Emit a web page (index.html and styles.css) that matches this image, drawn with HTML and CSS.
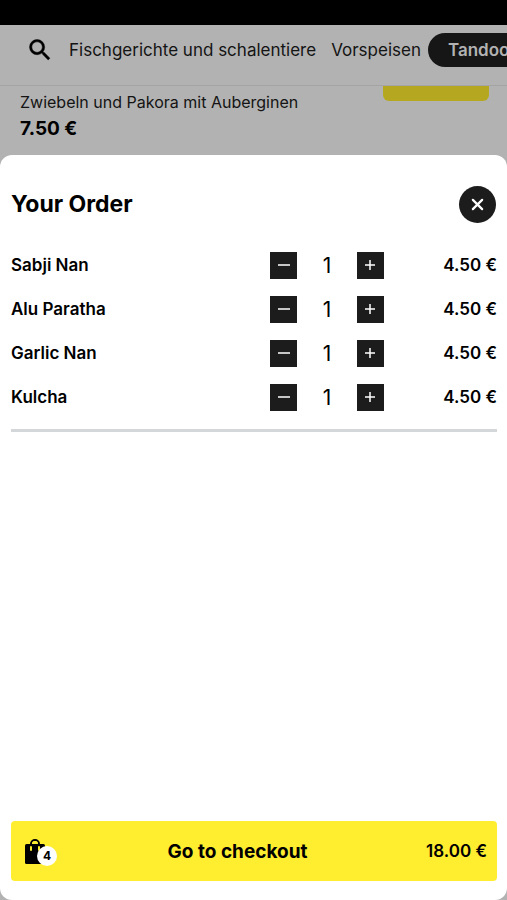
FILE: index.html
```html
<!DOCTYPE html>
<html lang="en">
<head>
  <meta charset="utf-8">
  <meta name="viewport" content="width=device-width, initial-scale=1">
  <title>Your Order</title>
  <link rel="stylesheet" href="styles.css">
</head>
<body>
  <div class="status-bar"></div>
  <nav class="categories" lang="de">
    <button class="search" type="button" aria-label="Search">
      <svg width="28" height="28" viewBox="0 0 24 24" fill="currentColor" stroke="currentColor" stroke-width=".4"><path d="M15.5 14h-.79l-.28-.27A6.47 6.47 0 0 0 16 9.500 6.500 6.500 0 1 0 9.500 16c1.610 0 3.090-.59 4.230-1.570l.27.28v.79l5 4.990L20.490 19l-4.990-5zm-6 0C7.010 14 5 11.990 5 9.500S7.010 5 9.500 5 14 7.010 14 9.500 11.990 14 9.500 14z"/></svg>
    </button>
    <a class="category" href="#fisch">Fischgerichte und schalentiere</a>
    <a class="category" href="#vorspeisen">Vorspeisen</a>
    <a class="category category-active" href="#tandoori">Tandoori</a>
  </nav>
  <section class="dish" lang="de">
    <div>
      <p class="dish-text">Zwiebeln und Pakora mit Auberginen</p>
      <p class="dish-price">7.50 €</p>
    </div>
    <div class="dish-action"></div>
  </section>
  <main class="sheet">
    <header class="sheet-header">
      <h1 class="title">Your Order</h1>
      <button class="close" type="button" aria-label="Close">
        <svg width="13" height="13" viewBox="0 0 14 14" fill="none" stroke="currentColor" stroke-width="2.400" stroke-linecap="round"><path d="M2 2l10 10M12 2L2 12"/></svg>
      </button>
    </header>
    <ul class="items">
      <li class="item">
        <span class="name">Sabji Nan</span>
        <div class="stepper">
          <button class="step" type="button" aria-label="Remove one Sabji Nan"><svg class="sign" viewBox="0 0 12 12"><path d="M0 6h12"/></svg></button>
          <span class="count">1</span>
          <button class="step" type="button" aria-label="Add one Sabji Nan"><svg class="sign" viewBox="0 0 12 12"><path d="M1 6h10M6 1v10"/></svg></button>
        </div>
        <span class="price">4.50 €</span>
      </li>
      <li class="item">
        <span class="name">Alu Paratha</span>
        <div class="stepper">
          <button class="step" type="button" aria-label="Remove one Alu Paratha"><svg class="sign" viewBox="0 0 12 12"><path d="M0 6h12"/></svg></button>
          <span class="count">1</span>
          <button class="step" type="button" aria-label="Add one Alu Paratha"><svg class="sign" viewBox="0 0 12 12"><path d="M1 6h10M6 1v10"/></svg></button>
        </div>
        <span class="price">4.50 €</span>
      </li>
      <li class="item">
        <span class="name">Garlic Nan</span>
        <div class="stepper">
          <button class="step" type="button" aria-label="Remove one Garlic Nan"><svg class="sign" viewBox="0 0 12 12"><path d="M0 6h12"/></svg></button>
          <span class="count">1</span>
          <button class="step" type="button" aria-label="Add one Garlic Nan"><svg class="sign" viewBox="0 0 12 12"><path d="M1 6h10M6 1v10"/></svg></button>
        </div>
        <span class="price">4.50 €</span>
      </li>
      <li class="item">
        <span class="name">Kulcha</span>
        <div class="stepper">
          <button class="step" type="button" aria-label="Remove one Kulcha"><svg class="sign" viewBox="0 0 12 12"><path d="M0 6h12"/></svg></button>
          <span class="count">1</span>
          <button class="step" type="button" aria-label="Add one Kulcha"><svg class="sign" viewBox="0 0 12 12"><path d="M1 6h10M6 1v10"/></svg></button>
        </div>
        <span class="price">4.50 €</span>
      </li>
    </ul>
    <button class="checkout" type="button">
      <span class="bag">
        <svg width="20" height="25" viewBox="0 0 20 25"><path d="M1.500 5h17q1.500 0 1.500 1.500v17q0 1.500-1.500 1.500h-17Q0 25 0 23.500v-17Q0 5 1.500 5z"/><path d="M6 6V5a4 4 0 0 1 8 0v1" fill="none" stroke="#000" stroke-width="2"/><path d="M7 5a3 3 0 0 1 6 0z" fill="#ffed30"/><path d="M6 8v3M14 8v3" stroke="#ffed30" stroke-width="2" stroke-linecap="round"/></svg>
        <span class="badge">4</span>
      </span>
      <span class="checkout-label">Go to checkout</span>
      <span class="checkout-total">18.00 €</span>
    </button>
  </main>
</body>
</html>
```
FILE: styles.css
```css
* {
  box-sizing: border-box;
}

body {
  margin: 0;
  min-height: 100vh;
  display: flex;
  flex-direction: column;
  overflow-x: hidden;
  background: #b2b2b2;
  color: #000;
  font-family: Inter, "Liberation Sans", sans-serif;
  font-size: 17px;
}

button {
  padding: 0;
  border: 0;
  color: inherit;
  font: inherit;
  cursor: pointer;
}

svg {
  display: block;
}

.status-bar {
  height: 25px;
  background: #000;
}

.categories {
  display: flex;
  align-items: center;
  gap: 15px;
  padding: 8px 0 18px 26px;
  border-bottom: 1px solid #a4a4a4;
  overflow: hidden;
}

.search {
  flex: none;
  background: none;
}

.category {
  flex: none;
  color: #141414;
  line-height: 34px;
  text-decoration: none;
}

.category-active {
  margin-left: -8px;
  padding: 0 20px;
  border-radius: 17px;
  background: #161616;
  color: #b2b2b2;
  font-weight: 600;
}

.dish {
  display: flex;
  justify-content: space-between;
  align-items: flex-start;
  padding: 0 18px 13px 20px;
}

.dish-text {
  margin: 4px 0 0;
  color: #141414;
  font-size: 16px;
  line-height: 25px;
}

.dish-price {
  margin: 0;
  font-size: 19px;
  font-weight: 700;
  line-height: 27px;
}

.dish-action {
  width: 106px;
  height: 15px;
  border-radius: 0 0 6px 6px;
  background: #b5a820;
}

.sheet {
  flex: 1;
  display: flex;
  flex-direction: column;
  padding: 30px 10px 19px 11px;
  border-radius: 12px;
  background: #fff;
}

.sheet-header {
  display: flex;
  justify-content: space-between;
  align-items: center;
  padding-right: 1px;
}

.title {
  margin: 0;
  font-size: 23px;
  font-weight: 700;
  line-height: 38px;
}

.close {
  display: grid;
  place-items: center;
  width: 37px;
  height: 37px;
  border-radius: 50%;
  background: #1c1c1c;
  color: #fff;
}

.items {
  margin: 20px 0 auto;
  padding: 0 0 10px;
  border-bottom: 3px solid #d3d7da;
  list-style: none;
}

.item {
  display: grid;
  grid-template-columns: 1fr 114px 113px;
  align-items: center;
  height: 44px;
  font-weight: 600;
}

.stepper {
  display: flex;
  justify-content: space-between;
  align-items: center;
}

.step {
  display: grid;
  place-items: center;
  width: 27px;
  height: 27px;
  background: #1c1c1c;
}

.sign {
  width: 12px;
  height: 12px;
  fill: none;
  stroke: #fff;
  stroke-width: 1.500;
}

.count {
  font-size: 21px;
  font-weight: 400;
}

.price {
  text-align: right;
}

.checkout {
  display: flex;
  justify-content: space-between;
  align-items: center;
  height: 60px;
  padding: 0 10px 0 14px;
  border-radius: 4px;
  background: #ffed30;
}

.bag {
  position: relative;
  width: 24px;
}

.badge {
  position: absolute;
  left: 12px;
  bottom: -2px;
  width: 20px;
  border-radius: 50%;
  background: #fff;
  font-size: 12px;
  font-weight: 700;
  line-height: 20px;
}

.checkout-label {
  font-size: 19px;
  font-weight: 700;
}

.checkout-total {
  font-weight: 600;
}
```
